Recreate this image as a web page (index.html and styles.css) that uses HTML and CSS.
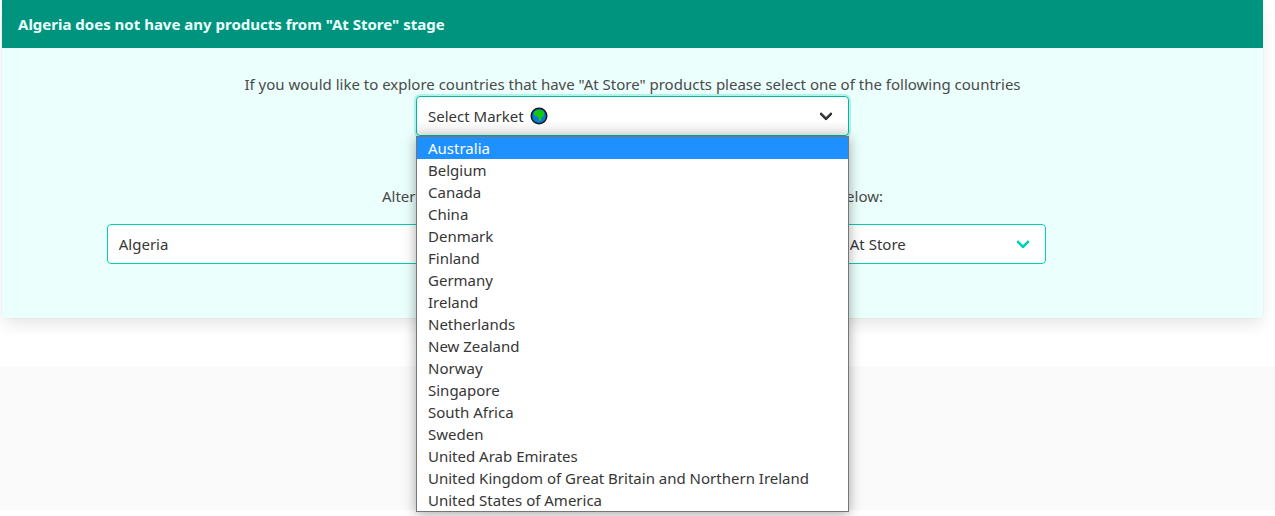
FILE: index.html
```html
<!DOCTYPE html>
<html lang="en">
<head>
<meta charset="utf-8">
<meta name="viewport" content="width=device-width, initial-scale=1">
<title>At Store products</title>
<link rel="stylesheet" href="styles.css">
</head>
<body>
<main class="page">
  <article class="message">
    <header class="message-header">Algeria does not have any products from "At Store" stage</header>
    <div class="message-body">
      <div class="market">
        <label class="prompt" for="market">If you would like to explore countries that have "At Store" products please select one of the following countries</label>
        <div class="select select-wide select-open">
          <select id="market"><option>Select Market</option></select>
          <svg class="globe" viewBox="0 0 18 18" aria-hidden="true">
            <circle cx="9" cy="9" r="7.700" fill="#0a78d4" stroke="#111a22" stroke-width="1.6"/>
            <path d="M4 5.500 6 3.500l3-.8 3.500.8 1.800 1.800-.8 1 1 1.200-.8 1.700-1.700.6-.6 2-1.400 2.400-1.300-.6-.2-2.800-.8-1.300-2.400-.4-1.500-1.500z" fill="#16c60c"/>
          </svg>
          <ul class="menu" role="listbox" aria-label="Markets">
            <li class="menu-item is-active" role="option" aria-selected="true">Australia</li>
            <li class="menu-item" role="option">Belgium</li>
            <li class="menu-item" role="option">Canada</li>
            <li class="menu-item" role="option">China</li>
            <li class="menu-item" role="option">Denmark</li>
            <li class="menu-item" role="option">Finland</li>
            <li class="menu-item" role="option">Germany</li>
            <li class="menu-item" role="option">Ireland</li>
            <li class="menu-item" role="option">Netherlands</li>
            <li class="menu-item" role="option">New Zealand</li>
            <li class="menu-item" role="option">Norway</li>
            <li class="menu-item" role="option">Singapore</li>
            <li class="menu-item" role="option">South Africa</li>
            <li class="menu-item" role="option">Sweden</li>
            <li class="menu-item" role="option">United Arab Emirates</li>
            <li class="menu-item" role="option">United Kingdom of Great Britain and Northern Ireland</li>
            <li class="menu-item" role="option">United States of America</li>
          </ul>
        </div>
      </div>
      <div class="alternative">
        <p class="prompt">Alternatively, you can choose a different country and stage from below:</p>
        <div class="columns">
          <div class="select select-wide">
            <select aria-label="Country"><option>Algeria</option></select>
          </div>
          <div class="select select-stage">
            <select aria-label="Stage"><option>At Store</option></select>
          </div>
        </div>
      </div>
    </div>
  </article>
</main>
<footer class="footer"></footer>
</body>
</html>
```
FILE: styles.css
```css
*,
*::after {
  box-sizing: border-box;
}

body {
  min-height: 100vh;
  margin: 0;
  background: #fff;
  color: #4a4a4a;
  font: 15px/24px "Noto Sans", "Open Sans", sans-serif;
}

.page {
  padding: 0 12px 48px 2px;
}

.message {
  border-radius: 4px;
  background: #ebfffc;
  box-shadow: 0 8px 16px -2px rgba(10, 10, 10, 0.1), 0 0 0 1px rgba(10, 10, 10, 0.02);
}

.message-header {
  padding: 12px 16px;
  background: #00947e;
  color: #ebfffc;
  font-weight: 700;
}

.message-body {
  display: flex;
  flex-direction: column;
  gap: 48px;
  padding: 24px 12px 54px;
}

.market {
  display: flex;
  flex-direction: column;
  align-items: center;
}

.alternative {
  display: flex;
  flex-direction: column;
  gap: 16px;
}

.prompt {
  margin: 0;
  text-align: center;
}

.columns {
  display: grid;
  grid-template-columns: 1fr 1fr;
  justify-items: center;
}

.select {
  position: relative;
  max-width: 100%;
}

.select-wide {
  width: 433px;
}

.select-stage {
  width: 208px;
}

.select select {
  display: block;
  width: 100%;
  height: 40px;
  padding: 0 40px 0 11px;
  border: 1px solid #00d1b2;
  border-radius: 4px;
  background: #fff;
  color: #363636;
  font: inherit;
  appearance: none;
}

.select::after {
  content: "";
  position: absolute;
  top: 13px;
  right: 18px;
  width: 10px;
  height: 10px;
  border: 3px solid #00d1b2;
  border-top: 0;
  border-right: 0;
  border-radius: 2px;
  transform: rotate(-45deg);
  pointer-events: none;
}

.select-open select {
  border-color: #00b89c;
  background: linear-gradient(#fff 60%, #f0f0f0);
  box-shadow: 0 0 0 2px rgba(0, 209, 178, 0.25);
}

.select-open::after {
  border-color: #363636;
}

.globe {
  position: absolute;
  top: 11px;
  left: 114px;
  width: 18px;
  height: 18px;
  pointer-events: none;
}

.menu {
  position: absolute;
  z-index: 1;
  top: 100%;
  left: 0;
  width: 100%;
  margin: 0;
  padding: 0;
  border: 1px solid #767676;
  background: #fff;
  box-shadow: 0 2px 12px rgba(0, 0, 0, 0.35);
  color: #363636;
  line-height: 22px;
  list-style: none;
}

.menu-item {
  padding: 0 11px;
}

.menu-item.is-active {
  background: #1e90ff;
  color: #fff;
}

.footer {
  height: 144px;
  background: #fafafa;
}
```
